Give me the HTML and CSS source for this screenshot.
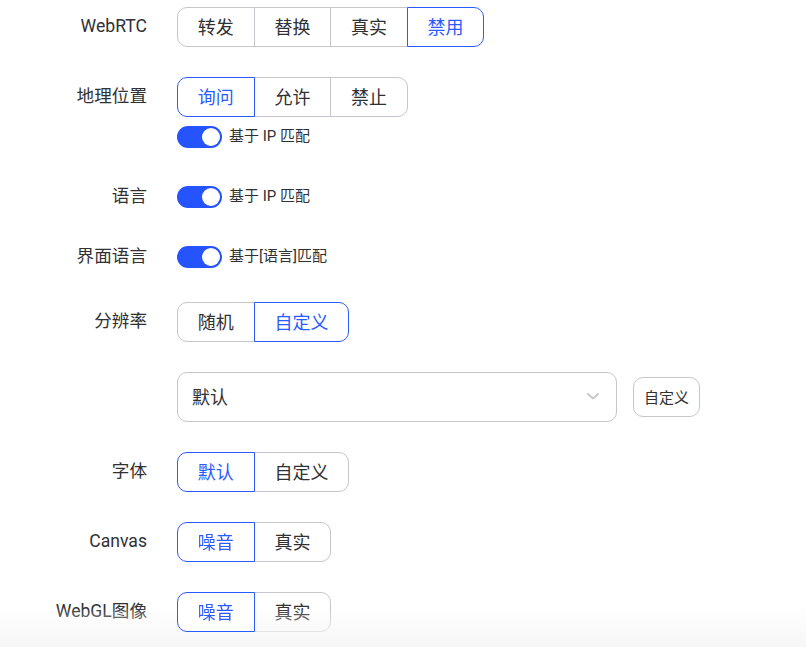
FILE: index.html
```html
<!DOCTYPE html>
<html lang="zh-CN">
<head>
<meta charset="utf-8">
<title>设置</title>
<link rel="stylesheet" href="styles.css">
</head>
<body>
<div class="form">
  <div class="row">
    <div class="label">WebRTC</div>
    <div class="radio-group">
      <span class="rb">转发</span><span class="rb">替换</span><span class="rb">真实</span><span class="rb active">禁用</span>
    </div>
  </div>

  <div class="row">
    <div class="label">地理位置</div>
    <div class="control">
      <div class="radio-group">
        <span class="rb active">询问</span><span class="rb">允许</span><span class="rb">禁止</span>
      </div>
      <div class="switch-line sub">
        <span class="switch"><span class="knob"></span></span><span class="switch-text">基于 IP 匹配</span>
      </div>
    </div>
  </div>

  <div class="row short">
    <div class="label">语言</div>
    <div class="switch-line">
      <span class="switch"><span class="knob"></span></span><span class="switch-text">基于 IP 匹配</span>
    </div>
  </div>

  <div class="row short">
    <div class="label">界面语言</div>
    <div class="switch-line">
      <span class="switch"><span class="knob"></span></span><span class="switch-text">基于[语言]匹配</span>
    </div>
  </div>

  <div class="row">
    <div class="label">分辨率</div>
    <div class="radio-group">
      <span class="rb">随机</span><span class="rb active">自定义</span>
    </div>
  </div>

  <div class="row">
    <div class="label"></div>
    <div class="select-line">
      <div class="select">
        <span class="select-value">默认</span>
        <svg class="chevron" width="14" height="10" viewBox="0 0 14 10"><path d="M2 3 L7 7.5 L12 3" fill="none" stroke="#c7c9d0" stroke-width="2" stroke-linecap="round" stroke-linejoin="round"/></svg>
      </div>
      <span class="btn">自定义</span>
    </div>
  </div>

  <div class="row">
    <div class="label">字体</div>
    <div class="radio-group">
      <span class="rb active">默认</span><span class="rb">自定义</span>
    </div>
  </div>

  <div class="row">
    <div class="label">Canvas</div>
    <div class="radio-group">
      <span class="rb active">噪音</span><span class="rb">真实</span>
    </div>
  </div>

  <div class="row">
    <div class="label">WebGL图像</div>
    <div class="radio-group">
      <span class="rb active">噪音</span><span class="rb">真实</span>
    </div>
  </div>
</div>
<div class="bottom-fade"></div>
</body>
</html>
```

FILE: styles.css
```css
html, body {
  margin: 0;
  padding: 0;
  background: #ffffff;
}

body {
  font-family: Roboto, "Noto Sans CJK SC", "Noto Sans", sans-serif;
  color: #303133;
  width: 806px;
  height: 647px;
  overflow: hidden;
}

.form {
  padding-top: 7px;
}

.row {
  display: flex;
  align-items: flex-start;
  margin-bottom: 30px;
}

.label {
  width: 147px;
  flex: none;
  margin-right: 30px;
  text-align: right;
  font-size: 17.6px;
  line-height: 39px;
  height: 40px;
  color: #303133;
}

.row.short .label {
  line-height: 29px;
  height: 30px;
}

.control {
  display: flex;
  flex-direction: column;
  align-items: flex-start;
}

.radio-group {
  display: flex;
  height: 40px;
}

.rb {
  position: relative;
  display: flex;
  align-items: center;
  justify-content: center;
  box-sizing: border-box;
  height: 40px;
  padding: 0 19.8px 2px;
  border: 1px solid #c4c6cc;
  margin-left: -1px;
  font-size: 18px;
  color: #303133;
  background: #fff;
}

.rb:first-child {
  margin-left: 0;
  border-radius: 10px 0 0 10px;
}

.rb:last-child {
  border-radius: 0 10px 10px 0;
}

.rb.active {
  border-color: #2b5bff;
  color: #2b5bff;
  z-index: 1;
}

.switch-line {
  display: flex;
  align-items: center;
  height: 30px;
}

.switch-line.sub {
  margin-top: 5px;
}

.switch {
  display: flex;
  justify-content: flex-end;
  align-items: center;
  box-sizing: border-box;
  width: 45px;
  height: 22px;
  padding: 0 2px;
  border-radius: 11px;
  background: #2554ff;
}

.knob {
  width: 18px;
  height: 18px;
  border-radius: 50%;
  background: #ffffff;
}

.switch-text {
  margin-left: 7px;
  font-size: 15px;
  line-height: 1;
  padding-bottom: 2px;
  color: #303133;
}

.select-line {
  display: flex;
  align-items: center;
  height: 50px;
}

.select {
  box-sizing: border-box;
  width: 440px;
  height: 50px;
  border: 1px solid #c4c6cc;
  border-radius: 10px;
  display: flex;
  align-items: center;
  justify-content: space-between;
  padding: 0 16px 2px 14px;
}

.select-value {
  font-size: 18px;
  color: #303133;
}

.chevron {
  display: block;
}

.btn {
  margin-left: 16px;
  box-sizing: border-box;
  width: 67px;
  height: 40px;
  padding-bottom: 2px;
  border: 1px solid #c4c6cc;
  border-radius: 10px;
  display: flex;
  align-items: center;
  justify-content: center;
  font-size: 15px;
  color: #303133;
}

.bottom-fade {
  position: fixed;
  left: 0;
  right: 0;
  bottom: 0;
  height: 40px;
  background: linear-gradient(to bottom, rgba(246, 246, 246, 0), #f6f6f6);
  pointer-events: none;
}
```
